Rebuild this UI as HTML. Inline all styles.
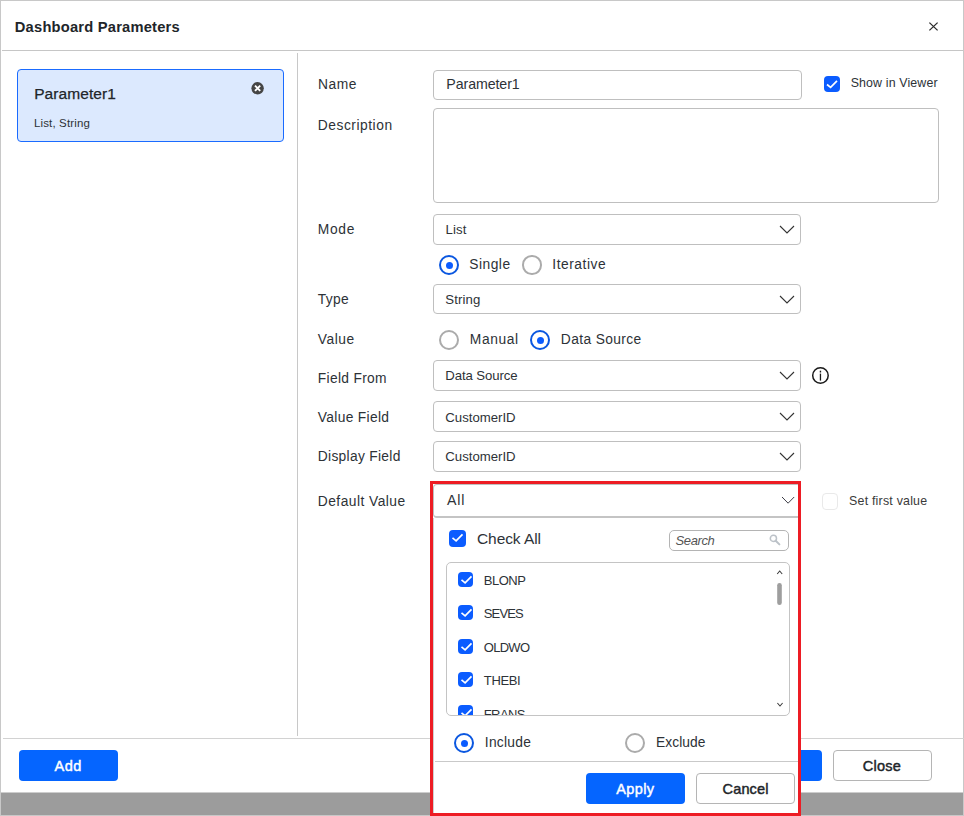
<!DOCTYPE html>
<html lang="en">
<head>
<meta charset="utf-8">
<title>Dashboard Parameters</title>
<style>
html,body{margin:0;padding:0;}
body{width:964px;height:816px;overflow:hidden;background:#fff;font-family:"Liberation Sans",sans-serif;color:#212529;position:relative;}
.abs{position:absolute;}
.t{position:absolute;white-space:nowrap;line-height:1;}
#frame{position:absolute;left:0;top:0;width:962px;height:814px;border:1px solid #c8c8c8;pointer-events:none;}
#hdrline{left:2px;top:50px;width:961px;height:1px;background:#c6c6c6;}
#vline{left:297px;top:53px;width:1px;height:683px;background:#c8c8c8;}
#ftrline{left:3px;top:738px;width:961px;height:1px;background:#d2d2d2;}
#greybar{left:1px;top:792px;width:962px;height:23px;background:#9c9c9c;border-top:1px solid #cdcdcd;box-sizing:border-box;}
.inp{position:absolute;box-sizing:border-box;border:1px solid #bfbfbf;border-radius:4px;background:#fff;}
.btn{position:absolute;box-sizing:border-box;border-radius:4px;}
.btn.pri{background:#0565ff;}
.btn.sec{background:#fff;border:1px solid #b5b5b5;}
.cb{position:absolute;box-sizing:border-box;border-radius:4px;background:#0b5cff;}
.cb svg{position:absolute;left:0;top:0;display:block;}
.rad{position:absolute;box-sizing:border-box;border-radius:50%;border:2px solid #ababab;background:#fff;}
.rad.on{border-color:#0b57e0;}
.rad.on i{position:absolute;left:50%;top:50%;width:7px;height:7px;margin:-3.5px 0 0 -3.5px;border-radius:50%;background:#0b5cff;}
#redbox{left:430px;top:481px;width:365px;height:329px;border:3px solid #ed1c24;pointer-events:none;}
#popup{left:433px;top:518px;width:365px;height:295px;background:#fff;border-left:1px solid #d0d0d0;box-sizing:border-box;}
#listbox{left:446px;top:562px;width:344px;height:154px;box-sizing:border-box;border:1px solid #c4c4c4;border-radius:5px;background:#fff;overflow:hidden;}
#listbox .t{font-size:13px;color:#2d3237;}
</style>
</head>
<body>
<div id="frame"></div>
<div id="hdrline" class="abs"></div>
<div id="vline" class="abs"></div>
<div id="ftrline" class="abs"></div>
<div id="greybar" class="abs"></div>

<!-- header close -->
<svg class="abs" id="closex" style="left:928px;top:21px" width="11" height="11" viewBox="0 0 11 11"><path d="M1.4 1.6 L9.6 9.4 M9.6 1.6 L1.4 9.4" stroke="#2b2b2b" stroke-width="1.3" fill="none"/></svg>

<!-- left card -->
<div class="abs" id="card" style="left:17px;top:69px;width:267px;height:73px;box-sizing:border-box;border:1px solid #1a6bff;border-radius:4px;background:#dce9fe;"></div>
<svg class="abs" id="cardx" style="left:250px;top:81px" width="15" height="15" viewBox="0 0 15 15"><circle cx="7.6" cy="7.3" r="6.2" fill="#454545"/><path d="M5 4.7 L10.2 9.9 M10.2 4.7 L5 9.9" stroke="#fff" stroke-width="1.9" fill="none"/></svg>

<!-- footer buttons -->
<div class="btn pri" id="addbtn" style="left:19px;top:750px;width:99px;height:31px;"></div>
<div class="btn pri" id="okbtn" style="left:723px;top:750px;width:99px;height:31px;"></div>
<div class="btn sec" id="closebtn" style="left:833px;top:750px;width:99px;height:31px;"></div>

<!-- form inputs -->
<div class="inp" id="i_name" style="left:433px;top:70px;width:369px;height:30px;"></div>
<div class="inp" id="i_desc" style="left:433px;top:108px;width:506px;height:95px;"></div>

<div class="cb" id="cb_show" style="left:824px;top:76px;width:16px;height:16px;"><svg width="16" height="16" viewBox="0 0 16 16"><path d="M3.00 8.50 L6.60 11.40 L13.00 4.90" fill="none" stroke="#fff" stroke-width="1.7" stroke-linecap="butt" stroke-linejoin="miter"/></svg></div>
<div class="inp" id="d_mode" style="left:433px;top:214px;width:368px;height:31px;"></div><svg class="abs" style="left:779px;top:224.5px" width="16" height="9" viewBox="-1 -1 16 9"><path d="M0 0 L7.0 7 L14 0" fill="none" stroke="#333" stroke-width="1.1" stroke-linejoin="miter"/></svg>
<div class="inp" id="d_type" style="left:433px;top:284px;width:368px;height:30px;"></div><svg class="abs" style="left:779px;top:294.5px" width="16" height="9" viewBox="-1 -1 16 9"><path d="M0 0 L7.0 7 L14 0" fill="none" stroke="#333" stroke-width="1.1" stroke-linejoin="miter"/></svg>
<div class="inp" id="d_ff" style="left:433px;top:360px;width:368px;height:31px;"></div><svg class="abs" style="left:779px;top:370.5px" width="16" height="9" viewBox="-1 -1 16 9"><path d="M0 0 L7.0 7 L14 0" fill="none" stroke="#333" stroke-width="1.1" stroke-linejoin="miter"/></svg>
<div class="inp" id="d_vf" style="left:433px;top:401px;width:368px;height:31px;"></div><svg class="abs" style="left:779px;top:411.5px" width="16" height="9" viewBox="-1 -1 16 9"><path d="M0 0 L7.0 7 L14 0" fill="none" stroke="#333" stroke-width="1.1" stroke-linejoin="miter"/></svg>
<div class="inp" id="d_df" style="left:433px;top:441px;width:368px;height:31px;"></div><svg class="abs" style="left:779px;top:451.5px" width="16" height="9" viewBox="-1 -1 16 9"><path d="M0 0 L7.0 7 L14 0" fill="none" stroke="#333" stroke-width="1.1" stroke-linejoin="miter"/></svg>
<div class="rad on" style="left:439px;top:255px;width:20px;height:20px;"><i></i></div>
<div class="rad" style="left:522px;top:255px;width:19.5px;height:19.5px;"></div>
<div class="rad" style="left:439px;top:330px;width:20px;height:20px;"></div>
<div class="rad on" style="left:530px;top:330px;width:20px;height:20px;"><i></i></div>
<svg class="abs" id="info" style="left:811px;top:367px" width="19" height="18" viewBox="0 0 19 18"><circle cx="9.45" cy="8.5" r="7.75" fill="none" stroke="#1a1a1a" stroke-width="1.5"/><rect x="8.8" y="6.6" width="1.3" height="7" fill="#1a1a1a"/><rect x="8.75" y="3.7" width="1.4" height="1.8" fill="#1a1a1a"/></svg>
<div class="abs" id="cb_first" style="left:822px;top:493px;width:16px;height:17px;box-sizing:border-box;border:1px solid #e9e9e9;border-radius:4px;background:#fff;"></div>
<div class="inp" id="d_dv" style="left:433px;top:484px;width:368px;height:34px;border-bottom:2px solid #c4c4c4;border-radius:4px;"></div>
<svg class="abs" style="left:780.8px;top:496.1px" width="14.2" height="8.2" viewBox="-1 -1 14.2 8.2"><path d="M0 0 L6.1 6.2 L12.2 0" fill="none" stroke="#3c3c46" stroke-width="1.0" stroke-linejoin="miter"/></svg>
<div class="abs" id="popup"></div>
<div class="cb" id="cb_all" style="left:449px;top:530px;width:17px;height:17px;"><svg width="17" height="17" viewBox="0 0 17 17"><path d="M3.50 7.90 L7.10 10.80 L13.50 4.30" fill="none" stroke="#fff" stroke-width="1.7" stroke-linecap="butt" stroke-linejoin="miter"/></svg></div>
<div class="inp" id="searchbox" style="left:669px;top:530px;width:120px;height:21px;border-color:#b4b4b4;border-radius:5px;"></div>
<svg class="abs" id="mag" style="left:769px;top:534px" width="12" height="12" viewBox="0 0 12 12"><circle cx="4.4" cy="4.4" r="3.1" fill="none" stroke="#bcc2c8" stroke-width="1.5"/><path d="M6.7 6.7 L10.4 10.4" stroke="#bcc2c8" stroke-width="2" stroke-linecap="round"/></svg>
<div class="abs" id="listbox"><div class="cb"  style="left:11px;top:9.0px;width:15px;height:15px;"><svg width="15" height="15" viewBox="0 0 15 15"><path d="M3.50 7.90 L7.10 10.80 L13.50 4.30" fill="none" stroke="#fff" stroke-width="1.7" stroke-linecap="butt" stroke-linejoin="miter"/></svg></div><div class="t" style="left:36.80px;top:11px;letter-spacing:-0.516px;">BLONP</div><div class="cb"  style="left:11px;top:42.35px;width:15px;height:15px;"><svg width="15" height="15" viewBox="0 0 15 15"><path d="M3.50 7.90 L7.10 10.80 L13.50 4.30" fill="none" stroke="#fff" stroke-width="1.7" stroke-linecap="butt" stroke-linejoin="miter"/></svg></div><div class="t" style="left:36.80px;top:44px;letter-spacing:-0.872px;">SEVES</div><div class="cb"  style="left:11px;top:75.7px;width:15px;height:15px;"><svg width="15" height="15" viewBox="0 0 15 15"><path d="M3.50 7.90 L7.10 10.80 L13.50 4.30" fill="none" stroke="#fff" stroke-width="1.7" stroke-linecap="butt" stroke-linejoin="miter"/></svg></div><div class="t" style="left:36.80px;top:78px;letter-spacing:-0.725px;">OLDWO</div><div class="cb"  style="left:11px;top:109.05px;width:15px;height:15px;"><svg width="15" height="15" viewBox="0 0 15 15"><path d="M3.50 7.90 L7.10 10.80 L13.50 4.30" fill="none" stroke="#fff" stroke-width="1.7" stroke-linecap="butt" stroke-linejoin="miter"/></svg></div><div class="t" style="left:36.80px;top:111px;letter-spacing:-0.359px;">THEBI</div><div class="cb"  style="left:11px;top:142.4px;width:15px;height:15px;"><svg width="15" height="15" viewBox="0 0 15 15"><path d="M3.50 7.90 L7.10 10.80 L13.50 4.30" fill="none" stroke="#fff" stroke-width="1.7" stroke-linecap="butt" stroke-linejoin="miter"/></svg></div><div class="t" style="left:36.80px;top:145px;letter-spacing:-0.613px;">FRANS</div></div>
<svg class="abs" id="sb" style="left:775px;top:568px" width="10" height="142" viewBox="0 0 10 142"><path d="M2.2 6 L4.7 3 L7.2 6" fill="none" stroke="#3a3a3a" stroke-width="1.05"/><rect x="2.2" y="15" width="4.6" height="22" rx="2.3" fill="#9e9e9e"/><path d="M2.4 135 L5 138 L7.6 135" fill="none" stroke="#3a3a3a" stroke-width="1.05"/></svg>
<div class="rad on" style="left:454px;top:733px;width:20px;height:20px;"><i></i></div>
<div class="rad" style="left:625px;top:733px;width:20px;height:20px;"></div>
<div class="abs" id="sep" style="left:435px;top:761px;width:363px;height:1px;background:#c9c9c9;"></div>
<div class="btn pri" id="applybtn" style="left:586px;top:773px;width:99px;height:31px;"></div>
<div class="btn sec" id="cancelbtn" style="left:696px;top:773px;width:99px;height:31px;"></div>
<div class="abs" id="redbox"></div>

<!-- text -->
<div class="t" id="title" style="left:14.80px;top:20px;font-size:14.7px;letter-spacing:0.214px;color:#212529;font-weight:bold;">Dashboard Parameters</div>
<div class="t" id="cardname" style="left:34.20px;top:86px;font-size:15.5px;letter-spacing:0.072px;color:#212529;-webkit-text-stroke:0.25px;">Parameter1</div>
<div class="t" id="cardsub" style="left:34.00px;top:118px;font-size:11.5px;letter-spacing:0.139px;color:#2d3237;">List, String</div>
<div class="t" id="l_name" style="left:318.05px;top:78px;font-size:13.8px;letter-spacing:0.497px;color:#2d3237;">Name</div>
<div class="t" id="l_desc" style="left:317.80px;top:119px;font-size:13.8px;letter-spacing:0.526px;color:#2d3237;">Description</div>
<div class="t" id="l_mode" style="left:317.80px;top:223px;font-size:13.8px;letter-spacing:0.696px;color:#2d3237;">Mode</div>
<div class="t" id="l_type" style="left:317.80px;top:293px;font-size:13.8px;letter-spacing:0.345px;color:#2d3237;">Type</div>
<div class="t" id="l_value" style="left:317.80px;top:333px;font-size:13.8px;letter-spacing:0.507px;color:#2d3237;">Value</div>
<div class="t" id="l_ff" style="left:317.80px;top:372px;font-size:13.8px;letter-spacing:0.311px;color:#2d3237;">Field From</div>
<div class="t" id="l_vf" style="left:317.80px;top:411px;font-size:13.8px;letter-spacing:0.321px;color:#2d3237;">Value Field</div>
<div class="t" id="l_df" style="left:317.80px;top:450px;font-size:13.8px;letter-spacing:0.294px;color:#2d3237;">Display Field</div>
<div class="t" id="l_dv" style="left:317.80px;top:495px;font-size:13.8px;letter-spacing:0.461px;color:#2d3237;">Default Value</div>
<div class="t" id="v_name" style="left:446.30px;top:77px;font-size:14.2px;letter-spacing:-0.083px;color:#2d3237;">Parameter1</div>
<div class="t" id="v_mode" style="left:445.55px;top:223px;font-size:13.2px;letter-spacing:0.100px;color:#2d3237;">List</div>
<div class="t" id="v_type" style="left:445.30px;top:293px;font-size:13.2px;letter-spacing:0.100px;color:#2d3237;">String</div>
<div class="t" id="v_ff" style="left:445.30px;top:369px;font-size:13.2px;letter-spacing:-0.092px;color:#2d3237;">Data Source</div>
<div class="t" id="v_vf" style="left:445.30px;top:411px;font-size:13.2px;letter-spacing:-0.006px;color:#2d3237;">CustomerID</div>
<div class="t" id="v_df" style="left:445.30px;top:450px;font-size:13.2px;letter-spacing:-0.006px;color:#2d3237;">CustomerID</div>
<div class="t" id="v_dv" style="left:447.10px;top:493px;font-size:14.2px;letter-spacing:0.806px;color:#2d3237;">All</div>
<div class="t" id="r_single" style="left:469.30px;top:258px;font-size:13.8px;letter-spacing:0.490px;color:#2d3237;">Single</div>
<div class="t" id="r_iter" style="left:552.30px;top:258px;font-size:13.8px;letter-spacing:0.525px;color:#2d3237;">Iterative</div>
<div class="t" id="r_manual" style="left:469.80px;top:333px;font-size:13.8px;letter-spacing:0.589px;color:#2d3237;">Manual</div>
<div class="t" id="r_ds" style="left:560.80px;top:333px;font-size:13.8px;letter-spacing:0.372px;color:#2d3237;">Data Source</div>
<div class="t" id="r_inc" style="left:484.80px;top:736px;font-size:13.8px;letter-spacing:0.257px;color:#2d3237;">Include</div>
<div class="t" id="r_exc" style="left:656.05px;top:736px;font-size:13.8px;letter-spacing:0.065px;color:#2d3237;">Exclude</div>
<div class="t" id="checkall" style="left:477.00px;top:531px;font-size:15.5px;letter-spacing:-0.081px;color:#2d3237;">Check All</div>
<div class="t" id="search" style="left:675.55px;top:534px;font-size:13px;letter-spacing:-0.401px;color:#555;font-style:italic;">Search</div>
<div class="t" id="showin" style="left:850.70px;top:77px;font-size:12.4px;letter-spacing:0.129px;color:#2d3237;">Show in Viewer</div>
<div class="t" id="setfirst" style="left:849.05px;top:495px;font-size:12.4px;letter-spacing:0.215px;color:#3a3a3a;">Set first value</div>
<div class="t" id="t_add" style="left:54.60px;top:759px;font-size:14.5px;letter-spacing:0.496px;color:#fff;-webkit-text-stroke:0.45px;">Add</div>
<div class="t" id="t_close" style="left:862.80px;top:759px;font-size:14.5px;letter-spacing:0.244px;color:#212529;-webkit-text-stroke:0.45px;">Close</div>
<div class="t" id="t_apply" style="left:616.30px;top:782px;font-size:14.5px;letter-spacing:0.354px;color:#fff;-webkit-text-stroke:0.45px;">Apply</div>
<div class="t" id="t_cancel" style="left:722.55px;top:782px;font-size:14.5px;letter-spacing:0.152px;color:#212529;-webkit-text-stroke:0.45px;">Cancel</div>
</body>
</html>
